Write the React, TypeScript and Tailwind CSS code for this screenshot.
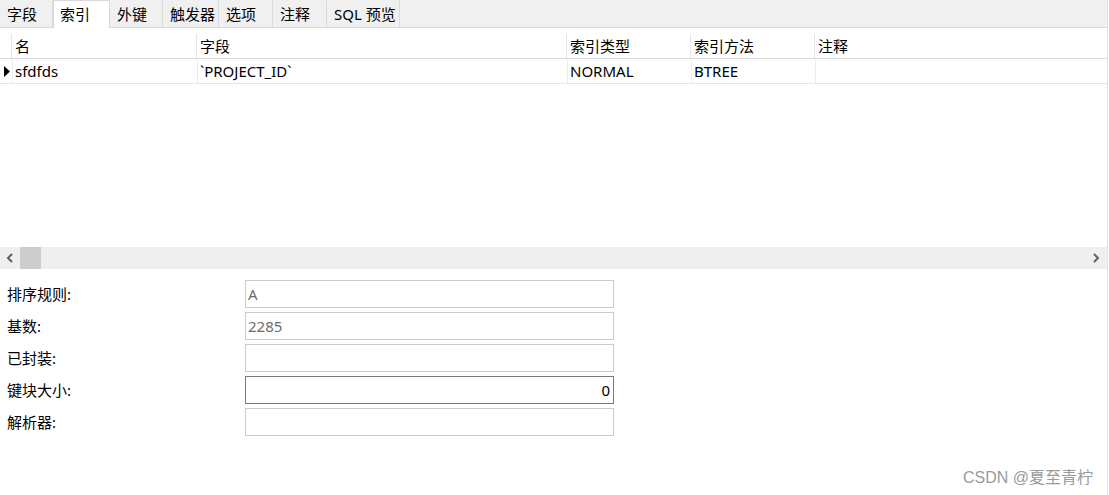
import React from 'react';

const TABS = ['字段', '索引', '外键', '触发器', '选项', '注释', 'SQL 预览'];
const TAB_W = [53, 57, 53, 56, 54, 54, 73];

const COLS = [
  { name: '名', w: 185 },
  { name: '字段', w: 370 },
  { name: '索引类型', w: 124 },
  { name: '索引方法', w: 124 },
  { name: '注释', w: 292 },
];

const ROW = ['sfdfds', '`PROJECT_ID`', 'NORMAL', 'BTREE', ''];

const FIELDS = [
  { label: '排序规则:', value: 'A', muted: true },
  { label: '基数:', value: '2285', muted: true },
  { label: '已封装:', value: '' },
  { label: '键块大小:', value: '0', right: true, active: true },
  { label: '解析器:', value: '' },
];

const font = "font-['Noto_Sans','Noto_Sans_CJK_SC',sans-serif]";

const App: React.FC = () => {
  return (
    <div className={`w-[1109px] h-[495px] bg-white text-[15px] text-black overflow-hidden flex flex-col ${font}`}>
      <div className="w-[1108px] border-r border-[#e3e3e3] flex flex-col h-full">
        {/* tabs */}
        <div className="flex h-[28px] bg-[#f0f0f0] border-b border-[#d9d9d9] shrink-0">
          {TABS.map((t, i) => (
            <div
              key={t}
              style={{ width: TAB_W[i] }}
              className={
                i === 1
                  ? 'h-[28px] bg-white border-x border-t border-[#d9d9d9] -mb-px flex items-center pl-[6px] leading-none'
                  : 'h-[26px] mt-[1px] border-r border-[#dadada] flex items-center pl-[7px] leading-none'
              }
            >
              {t}
            </div>
          ))}
        </div>

        {/* grid */}
        <div className="h-[219px] shrink-0 pt-[6px]">
          <div className="flex h-[25px] border-b border-[#dadada]">
            <div className="w-[12px] border-r border-[#e6e6e6]" />
            {COLS.map((c) => (
              <div key={c.name} style={{ width: c.w }} className="border-r border-[#e6e6e6] pl-[3px] flex items-center last:border-r-0">
                {c.name}
              </div>
            ))}
          </div>
          <div className="flex h-[25px] border-b border-[#e6e6e6]">
            <div className="w-[12px] flex items-center pl-[4px]">
              <svg width="6" height="11" viewBox="0 0 6 11">
                <path d="M0 0 L6 5.5 L0 11 Z" fill="#000" />
              </svg>
            </div>
            {COLS.map((c, i) => (
              <div key={c.name} style={{ width: c.w }} className="border-l border-[#ececec] pl-[2px] flex items-center">
                {ROW[i]}
              </div>
            ))}
          </div>
        </div>

        {/* horizontal scrollbar */}
        <div className="h-[22px] bg-[#efefef] flex items-center shrink-0">
          <div className="w-[20px] flex justify-center">
            <svg width="8" height="10" viewBox="0 0 8 10">
              <path d="M6 1 L2 5 L6 9" stroke="#606060" strokeWidth="2" fill="none" />
            </svg>
          </div>
          <div className="w-[21px] h-full bg-[#cdcdcd]" />
          <div className="flex-1" />
          <div className="w-[20px] flex justify-center mr-[1px]">
            <svg width="8" height="10" viewBox="0 0 8 10">
              <path d="M2 1 L6 5 L2 9" stroke="#606060" strokeWidth="2" fill="none" />
            </svg>
          </div>
        </div>

        {/* properties */}
        <div className="flex flex-col gap-[4px] pt-[11px]">
          {FIELDS.map((f) => (
            <div key={f.label} className="flex items-center h-[28px]">
              <div className="w-[245px] pl-[7px]">{f.label}</div>
              <div
                className={`w-[369px] h-[28px] border flex items-center px-[2px] ${
                  f.active ? 'border-[#7a7a7a]' : 'border-[#cccccc]'
                } ${f.right ? 'justify-end pr-[3px]' : ''} ${f.muted ? 'text-[#6d6d6d]' : 'text-black'}`}
              >
                {f.value}
              </div>
            </div>
          ))}
        </div>

        <div className="flex-1 flex items-end justify-end pr-[14px] pb-[5px]">
          <span className="text-[16px] text-[#9a9a9a] font-['Liberation_Sans','Noto_Sans_CJK_SC',sans-serif]">CSDN @夏至青柠</span>
        </div>
      </div>
    </div>
  );
};

export default App;
